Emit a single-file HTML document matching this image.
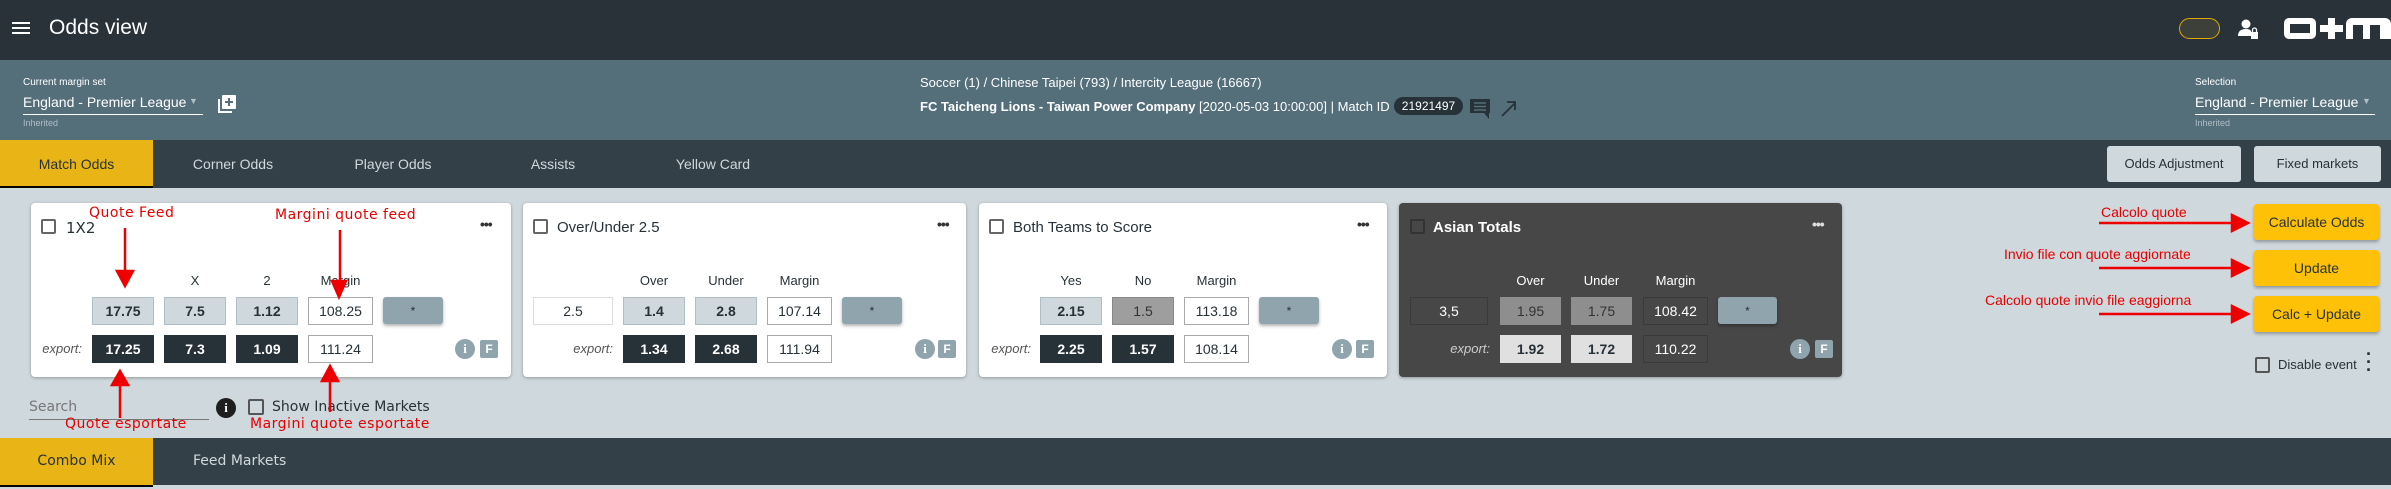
<!DOCTYPE html>
<html><head><meta charset="utf-8">
<style>
*{margin:0;padding:0;box-sizing:border-box}
body{width:2391px;height:489px;overflow:hidden;background:#cfd8dc;font-family:"Liberation Sans Narrow","Liberation Sans",sans-serif;position:relative}
.a{position:absolute}
.t{position:absolute;white-space:nowrap}
.red{color:#e60000;font-family:"DejaVu Sans",sans-serif;font-size:14px;letter-spacing:0.5px}
.card{position:absolute;background:#fff;border-radius:4px;box-shadow:0 1px 3px rgba(0,0,0,.3);top:203px;height:174px}
.box{position:absolute;height:28px;font-size:14px;display:flex;align-items:center;justify-content:center}
.lt{background:#cfd8dc;border:1px solid #b0bec5;font-weight:bold;color:#263238}
.dk{background:#263238;color:#fff;font-weight:bold}
.wh{background:#fff;border:1px solid #aaa;color:#263238}
.star{position:absolute;height:27px;background:#90a4ae;border-radius:3px;box-shadow:0 2px 3px rgba(0,0,0,.3);font-size:12px;display:flex;align-items:center;justify-content:center;color:#263238}
.cb{position:absolute;width:15px;height:15px;border:2px solid #666;border-radius:2px}
.lbl{position:absolute;font-size:13px;color:#263238;top:273px;text-align:center}
.exp{position:absolute;font-size:13px;font-style:italic;color:#555;top:341px;text-align:right}
.ic{position:absolute;top:339px;width:20px;height:20px;border-radius:50%;background:#90a4ae;color:#fff;font-weight:bold;font-size:13px;text-align:center;line-height:20px;font-family:"Liberation Serif",serif}
.F{position:absolute;top:340px;width:18px;height:18px;background:#90a4ae;color:#fff;font-weight:bold;font-size:12px;text-align:center;line-height:18px;border-radius:2px}
.dots{position:absolute;top:216px;font-size:14px;font-weight:bold;letter-spacing:-1px;color:#333}
.ybtn{position:absolute;left:2254px;width:125px;height:36px;background:#ffc107;border-radius:3px;box-shadow:0 2px 3px rgba(0,0,0,.3);font-size:14px;color:#263238;display:flex;align-items:center;justify-content:center}
</style></head><body>
<!-- header -->
<div class="a" style="left:0;top:0;width:2391px;height:60px;background:#283238"></div>
<div class="a" style="left:12px;top:22px;width:18px;height:2px;background:#fff"></div>
<div class="a" style="left:12px;top:27px;width:18px;height:2px;background:#fff"></div>
<div class="a" style="left:12px;top:32px;width:18px;height:2px;background:#fff"></div>
<div class="t" style="left:49px;top:16px;font-size:21px;color:#fff">Odds view</div>
<div class="a" style="left:2179px;top:18px;width:41px;height:21px;border:1.5px solid #e0a800;border-radius:11px;background:#3d4038"></div>
<svg class="a" style="left:2237px;top:19px" width="23" height="21" viewBox="0 0 23 21"><circle cx="9" cy="5" r="4.5" fill="#fff"/><path d="M1 17 Q1 10 9 10 Q13 10 14 12 L14 17Z" fill="#fff"/><rect x="14" y="13" width="7" height="7" fill="#fff"/><path d="M15.5 13 V11 a2 2 0 0 1 4 0 V13" stroke="#fff" stroke-width="1.3" fill="none"/></svg>
<div class="a" style="left:2284px;top:18px;width:32px;height:21px;border:6px solid #fff;border-radius:5px"></div>
<div class="a" style="left:2320px;top:25px;width:23px;height:7px;background:#fff"></div>
<div class="a" style="left:2328px;top:18px;width:7px;height:21px;background:#fff"></div>
<div class="a" style="left:2346px;top:18px;width:45px;height:21px;background:#fff;border-radius:6px 6px 0 0"></div>
<div class="a" style="left:2353px;top:25px;width:10px;height:14px;background:#283238"></div>
<div class="a" style="left:2370px;top:25px;width:10px;height:14px;background:#283238"></div>
<!-- subheader -->
<div class="a" style="left:0;top:60px;width:2391px;height:80px;background:#546e7a"></div>
<div class="t" style="left:23px;top:77px;font-size:10px;color:#fff">Current margin set</div>
<div class="t" style="left:23px;top:94px;font-size:14px;color:#fff">England - Premier League</div>
<div class="t" style="left:189px;top:96px;font-size:9px;color:#b0bec5">▼</div>
<div class="a" style="left:23px;top:114px;width:180px;height:1px;background:#fff"></div>
<div class="t" style="left:23px;top:118px;font-size:9px;color:#b0bec5">Inherited</div>
<svg class="a" style="left:217px;top:94px" width="21" height="20" viewBox="0 0 21 20"><path d="M2 5 V18 H15" stroke="#fff" stroke-width="2" fill="none"/><rect x="5" y="1" width="14" height="14" rx="1" fill="#fff"/><path d="M12 4 V12 M8 8 H16" stroke="#546e7a" stroke-width="2"/></svg>
<div class="t" style="left:920px;top:75px;font-size:13px;color:#fff">Soccer (1) / Chinese Taipei (793) / Intercity League (16667)</div>
<div class="t" style="left:920px;top:99px;font-size:13px;color:#fff"><b>FC Taicheng Lions - Taiwan Power Company</b> [2020-05-03 10:00:00] | Match ID</div>
<div class="a" style="left:1394px;top:97px;width:69px;height:18px;background:#263238;border-radius:9px;color:#fff;font-size:12px;text-align:center;line-height:18px">21921497</div>
<svg class="a" style="left:1470px;top:99px" width="21" height="20" viewBox="0 0 21 20"><path d="M0 0 H20 V14 H19 V20 L14 14 H0Z" fill="#263238"/><path d="M4 4 H16 M4 7.5 H16 M4 11 H16" stroke="#546e7a" stroke-width="1.5"/></svg>
<svg class="a" style="left:1500px;top:100px" width="17" height="17" viewBox="0 0 17 17"><path d="M2 16 L15 3 M7 2 H15 V10" stroke="#263238" stroke-width="1.8" fill="none"/></svg>
<div class="t" style="left:2195px;top:77px;font-size:10px;color:#fff">Selection</div>
<div class="t" style="left:2195px;top:94px;font-size:14px;color:#fff">England - Premier League</div>
<div class="t" style="left:2362px;top:96px;font-size:9px;color:#b0bec5">▼</div>
<div class="a" style="left:2195px;top:114px;width:180px;height:1px;background:#fff"></div>
<div class="t" style="left:2195px;top:118px;font-size:9px;color:#b0bec5">Inherited</div>
<!-- tabs -->
<div class="a" style="left:0;top:140px;width:2391px;height:48px;background:#334048"></div>
<div class="a" style="left:0;top:140px;width:153px;height:48px;background:#e9b516;border-bottom:2px solid #000"></div>
<div class="t" style="left:0;width:153px;text-align:center;top:156px;font-size:14px;color:#263238">Match Odds</div>
<div class="t" style="left:153px;width:160px;text-align:center;top:156px;font-size:14px;color:#cfd8dc">Corner Odds</div>
<div class="t" style="left:313px;width:160px;text-align:center;top:156px;font-size:14px;color:#cfd8dc">Player Odds</div>
<div class="t" style="left:473px;width:160px;text-align:center;top:156px;font-size:14px;color:#cfd8dc">Assists</div>
<div class="t" style="left:633px;width:160px;text-align:center;top:156px;font-size:14px;color:#cfd8dc">Yellow Card</div>
<div class="a" style="left:2107px;top:146px;width:134px;height:36px;background:#cfd8dc;border-radius:3px;font-size:13px;color:#263238;text-align:center;line-height:36px">Odds Adjustment</div>
<div class="a" style="left:2254px;top:146px;width:127px;height:36px;background:#cfd8dc;border-radius:3px;font-size:13px;color:#263238;text-align:center;line-height:36px">Fixed markets</div>

<!-- card 1 -->
<div class="card" style="left:31px;width:480px"></div>
<div class="cb" style="left:41px;top:219px"></div>
<div class="t" style="left:66px;top:219px;font-size:15px;color:#263238;font-family:'DejaVu Sans',sans-serif">1X2</div>
<div class="dots" style="left:480px">•••</div>
<div class="lbl" style="left:164px;width:62px">X</div>
<div class="lbl" style="left:236px;width:62px">2</div>
<div class="lbl" style="left:308px;width:65px">Margin</div>
<div class="box lt" style="left:92px;top:297px;width:62px">17.75</div>
<div class="box lt" style="left:164px;top:297px;width:62px">7.5</div>
<div class="box lt" style="left:236px;top:297px;width:62px">1.12</div>
<div class="box wh" style="left:308px;top:297px;width:65px">108.25</div>
<div class="star" style="left:383px;top:297px;width:60px">*</div>
<div class="exp" style="left:30px;width:52px">export:</div>
<div class="box dk" style="left:92px;top:335px;width:62px">17.25</div>
<div class="box dk" style="left:164px;top:335px;width:62px">7.3</div>
<div class="box dk" style="left:236px;top:335px;width:62px">1.09</div>
<div class="box wh" style="left:308px;top:335px;width:65px">111.24</div>
<div class="ic" style="left:455px">i</div><div class="F" style="left:480px">F</div>

<!-- card 2 -->
<div class="card" style="left:523px;width:443px"></div>
<div class="cb" style="left:533px;top:219px"></div>
<div class="t" style="left:557px;top:219px;font-size:15px;color:#263238">Over/Under 2.5</div>
<div class="dots" style="left:937px">•••</div>
<div class="lbl" style="left:623px;width:62px">Over</div>
<div class="lbl" style="left:695px;width:62px">Under</div>
<div class="lbl" style="left:767px;width:65px">Margin</div>
<div class="box wh" style="left:533px;top:297px;width:80px;border-color:#ddd">2.5</div>
<div class="box lt" style="left:623px;top:297px;width:62px">1.4</div>
<div class="box lt" style="left:695px;top:297px;width:62px">2.8</div>
<div class="box wh" style="left:767px;top:297px;width:65px">107.14</div>
<div class="star" style="left:842px;top:297px;width:60px">*</div>
<div class="exp" style="left:560px;width:53px">export:</div>
<div class="box dk" style="left:623px;top:335px;width:62px">1.34</div>
<div class="box dk" style="left:695px;top:335px;width:62px">2.68</div>
<div class="box wh" style="left:767px;top:335px;width:65px">111.94</div>
<div class="ic" style="left:915px">i</div><div class="F" style="left:938px">F</div>

<!-- card 3 -->
<div class="card" style="left:979px;width:408px"></div>
<div class="cb" style="left:989px;top:219px"></div>
<div class="t" style="left:1013px;top:219px;font-size:15px;color:#263238">Both Teams to Score</div>
<div class="dots" style="left:1357px">•••</div>
<div class="lbl" style="left:1040px;width:62px">Yes</div>
<div class="lbl" style="left:1112px;width:62px">No</div>
<div class="lbl" style="left:1184px;width:65px">Margin</div>
<div class="box lt" style="left:1040px;top:297px;width:62px">2.15</div>
<div class="box" style="left:1112px;top:297px;width:62px;background:#9e9e9e;border:1px solid #888;color:#333">1.5</div>
<div class="box wh" style="left:1184px;top:297px;width:65px">113.18</div>
<div class="star" style="left:1259px;top:297px;width:60px">*</div>
<div class="exp" style="left:978px;width:53px">export:</div>
<div class="box dk" style="left:1040px;top:335px;width:62px">2.25</div>
<div class="box dk" style="left:1112px;top:335px;width:62px">1.57</div>
<div class="box wh" style="left:1184px;top:335px;width:65px">108.14</div>
<div class="ic" style="left:1332px">i</div><div class="F" style="left:1356px">F</div>

<!-- card 4 -->
<div class="card" style="left:1399px;width:443px;background:#474747"></div>
<div class="cb" style="left:1410px;top:219px;border-color:#333"></div>
<div class="t" style="left:1433px;top:219px;font-size:15px;color:#fff;font-weight:bold">Asian Totals</div>
<div class="dots" style="left:1812px;color:#ddd">•••</div>
<div class="lbl" style="left:1500px;width:61px;color:#fff">Over</div>
<div class="lbl" style="left:1571px;width:61px;color:#fff">Under</div>
<div class="lbl" style="left:1643px;width:65px;color:#fff">Margin</div>
<div class="box" style="left:1410px;top:297px;width:78px;border:1px solid #3a3a3a;color:#fff">3,5</div>
<div class="box" style="left:1500px;top:297px;width:61px;background:#8e8e8e;color:#333">1.95</div>
<div class="box" style="left:1571px;top:297px;width:61px;background:#8e8e8e;color:#333">1.75</div>
<div class="box" style="left:1643px;top:297px;width:65px;border:1px solid #3a3a3a;color:#fff">108.42</div>
<div class="star" style="left:1718px;top:297px;width:59px">*</div>
<div class="exp" style="left:1430px;width:60px;color:#ccc">export:</div>
<div class="box" style="left:1500px;top:335px;width:61px;background:#e0e0e0;color:#263238;font-weight:bold">1.92</div>
<div class="box" style="left:1571px;top:335px;width:61px;background:#e0e0e0;color:#263238;font-weight:bold">1.72</div>
<div class="box" style="left:1643px;top:335px;width:65px;border:1px solid #3a3a3a;color:#fff">110.22</div>
<div class="ic" style="left:1790px">i</div><div class="F" style="left:1815px">F</div>

<!-- right buttons -->
<div class="ybtn" style="top:204px">Calculate Odds</div>
<div class="ybtn" style="top:250px">Update</div>
<div class="ybtn" style="top:296px">Calc + Update</div>
<div class="cb" style="left:2255px;top:357px;width:15px;height:16px;border-color:#555"></div>
<div class="t" style="left:2278px;top:357px;font-size:13px;color:#263238">Disable event</div>
<div class="t" style="left:2366px;top:350px;font-size:18px;font-weight:bold;color:#263238;line-height:8px">·<br>·<br>·</div>

<!-- search row -->
<div class="t" style="left:29px;top:399px;font-size:14px;color:#777;font-family:'DejaVu Sans',sans-serif">Search</div>
<div class="a" style="left:29px;top:419px;width:180px;height:1px;background:#777"></div>
<div class="a" style="left:216px;top:398px;width:20px;height:20px;border-radius:50%;background:#1e1e1e;color:#fff;font-weight:bold;font-size:13px;text-align:center;line-height:20px;font-family:'Liberation Serif',serif">i</div>
<div class="cb" style="left:248px;top:399px;width:16px;height:16px;border-color:#555"></div>
<div class="t" style="left:272px;top:399px;font-size:14px;color:#263238;font-family:'DejaVu Sans',sans-serif">Show Inactive Markets</div>

<!-- bottom tabs -->
<div class="a" style="left:0;top:438px;width:2391px;height:47px;background:#334048"></div>
<div class="a" style="left:0;top:438px;width:153px;height:49px;background:#e9b516;border-bottom:2px solid #000"></div>
<div class="t" style="left:0;width:153px;text-align:center;top:453px;font-size:14px;color:#263238;font-family:'DejaVu Sans',sans-serif">Combo Mix</div>
<div class="t" style="left:193px;top:453px;font-size:14px;color:#cfd8dc;font-family:'DejaVu Sans',sans-serif">Feed Markets</div>

<!-- annotations -->
<div class="t red" style="left:89px;top:205px">Quote Feed</div>
<div class="t red" style="left:275px;top:207px">Margini quote feed</div>
<div class="t red" style="left:65px;top:416px">Quote esportate</div>
<div class="t red" style="left:250px;top:416px">Margini quote esportate</div>
<div class="t red" style="left:2101px;top:204px;font-family:'Liberation Sans Narrow','Liberation Sans',sans-serif;font-size:14px;letter-spacing:0">Calcolo quote</div>
<div class="t red" style="left:2004px;top:246px;font-family:'Liberation Sans Narrow','Liberation Sans',sans-serif;font-size:14px;letter-spacing:0">Invio file con quote aggiornate</div>
<div class="t red" style="left:1985px;top:292px;font-family:'Liberation Sans Narrow','Liberation Sans',sans-serif;font-size:14px;letter-spacing:0">Calcolo quote invio file eaggiorna</div>
<svg class="a" style="left:0;top:0" width="2391" height="489" viewBox="0 0 2391 489">
<g stroke="#e00" stroke-width="2.5" fill="#e00">
<path d="M125 228 V278"/><path d="M117 271 L125 286 L133 271Z"/>
<path d="M340 230 V288"/><path d="M332 281 L339 297 L346 281Z"/>
<path d="M120 418 V380"/><path d="M112 385 L120 371 L128 385Z"/>
<path d="M330 412 V376"/><path d="M322 381 L330 366 L338 381Z"/>
<path d="M2099 223 H2236"/><path d="M2232 215 L2248 223 L2232 231Z"/>
<path d="M2099 268 H2236"/><path d="M2232 260 L2248 268 L2232 276Z"/>
<path d="M2099 314 H2236"/><path d="M2232 306 L2248 314 L2232 322Z"/>
</g></svg>
</body></html>
